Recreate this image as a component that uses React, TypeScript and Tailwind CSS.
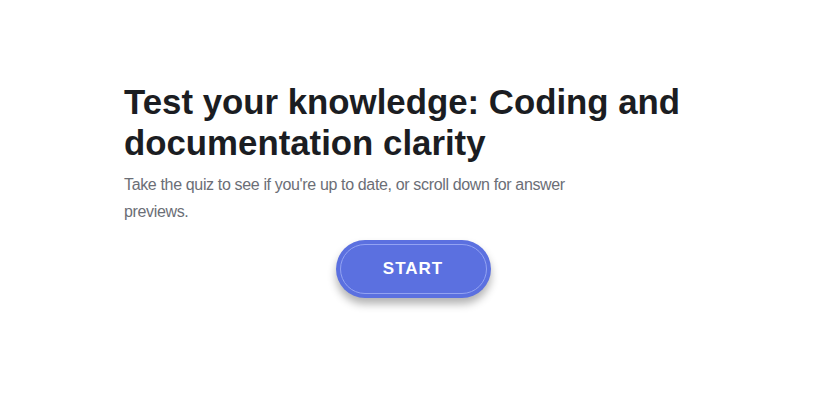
export default function App() {
  return (
    <div className="min-h-[406px] w-full bg-white font-['Liberation_Sans',Arial,sans-serif]">
      <div className="ml-[124px] w-[578px] pt-[81px]">
        <h1 className="text-[34.8px] font-bold leading-[41px] text-[#1b1d22]">
          Test your knowledge: Coding and documentation clarity
        </h1>
        <p className="mt-[8px] max-w-[480px] text-[16px] leading-[27px] tracking-[-0.35px] text-[#6b6e76]">
          Take the quiz to see if you're up to date, or scroll down for answer previews.
        </p>
        <div className="mt-[15px] flex justify-center">
          <button className="h-[58px] w-[155px] rounded-full bg-[#5b70e0] p-[4px] shadow-[0_6px_8px_rgba(0,0,0,0.3)]">
            <span className="flex h-full w-full items-center justify-center rounded-full border border-[#93a3f2] text-[17px] font-bold tracking-[1px] text-white">
              START
            </span>
          </button>
        </div>
      </div>
    </div>
  );
}
